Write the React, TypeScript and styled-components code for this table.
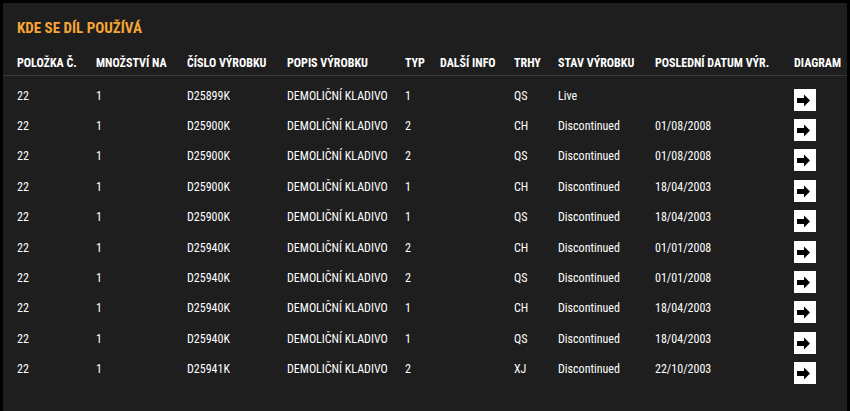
import React from "react";
import styled, { createGlobalStyle } from "styled-components";

const GlobalStyle = createGlobalStyle`
  html, body {
    margin: 0;
    padding: 0;
    background: #000;
    width: 850px;
    height: 411px;
    overflow: hidden;
  }
  * { box-sizing: border-box; }
`;

const FONT = `"Roboto Condensed", "Liberation Sans Narrow", "DejaVu Sans Condensed", sans-serif`;

const Panel = styled.section`
  margin: 3px 3px 0 3px;
  height: 408px;
  background: #1e1e1e;
  padding-top: 15px;
  font-family: ${FONT};
  color: #fff;
`;

const Title = styled.h2`
  margin: 0 0 11px 14px;
  font-size: 15px;
  line-height: 20px;
  font-weight: 700;
  color: #f7a535;
  text-transform: uppercase;
`;

const Table = styled.table`
  width: 844px;
  table-layout: fixed;
  border-collapse: collapse;
  border-spacing: 0;
`;

const HeadCell = styled.th<{ $first?: boolean }>`
  text-align: left;
  font-size: 12px;
  font-weight: 700;
  line-height: 14px;
  padding: 7px 0 5px ${(p) => (p.$first ? "14px" : "0")};
  border-bottom: 1px solid #3a3a3a;
  white-space: nowrap;
  text-transform: uppercase;
`;

const Cell = styled.td<{ $first?: boolean }>`
  height: 30.4px;
  padding: 13px 0 0 ${(p) => (p.$first ? "14px" : "0")};
  vertical-align: top;
  font-size: 12px;
  line-height: 14px;
  white-space: nowrap;
`;

const DiagramButton = styled.button`
  width: 22px;
  height: 22px;
  margin: 0 0 -5px 0;
  padding: 0;
  border: none;
  background: #fff;
  cursor: pointer;
  display: flex;
  align-items: center;
  justify-content: center;
`;

const ArrowIcon = () => (
  <svg width="22" height="22" viewBox="0 0 22 22" aria-hidden="true">
    <rect x="3" y="9" width="8" height="5" fill="#000" />
    <polygon points="10,5.5 16,11.5 10,17.5" fill="#000" />
  </svg>
);

const widths = [93, 91, 100, 118, 35, 74, 44, 97, 139, 53];
const headers = [
  "Položka č.",
  "Množství na",
  "Číslo výrobku",
  "Popis výrobku",
  "Typ",
  "Další info",
  "Trhy",
  "Stav výrobku",
  "Poslední datum výr.",
  "Diagram",
];

type Row = {
  item: string;
  qty: string;
  code: string;
  desc: string;
  type: string;
  info: string;
  market: string;
  status: string;
  date: string;
};

const rows: Row[] = [
  { item: "22", qty: "1", code: "D25899K", desc: "DEMOLIČNÍ KLADIVO", type: "1", info: "", market: "QS", status: "Live", date: "" },
  { item: "22", qty: "1", code: "D25900K", desc: "DEMOLIČNÍ KLADIVO", type: "2", info: "", market: "CH", status: "Discontinued", date: "01/08/2008" },
  { item: "22", qty: "1", code: "D25900K", desc: "DEMOLIČNÍ KLADIVO", type: "2", info: "", market: "QS", status: "Discontinued", date: "01/08/2008" },
  { item: "22", qty: "1", code: "D25900K", desc: "DEMOLIČNÍ KLADIVO", type: "1", info: "", market: "CH", status: "Discontinued", date: "18/04/2003" },
  { item: "22", qty: "1", code: "D25900K", desc: "DEMOLIČNÍ KLADIVO", type: "1", info: "", market: "QS", status: "Discontinued", date: "18/04/2003" },
  { item: "22", qty: "1", code: "D25940K", desc: "DEMOLIČNÍ KLADIVO", type: "2", info: "", market: "CH", status: "Discontinued", date: "01/01/2008" },
  { item: "22", qty: "1", code: "D25940K", desc: "DEMOLIČNÍ KLADIVO", type: "2", info: "", market: "QS", status: "Discontinued", date: "01/01/2008" },
  { item: "22", qty: "1", code: "D25940K", desc: "DEMOLIČNÍ KLADIVO", type: "1", info: "", market: "CH", status: "Discontinued", date: "18/04/2003" },
  { item: "22", qty: "1", code: "D25940K", desc: "DEMOLIČNÍ KLADIVO", type: "1", info: "", market: "QS", status: "Discontinued", date: "18/04/2003" },
  { item: "22", qty: "1", code: "D25941K", desc: "DEMOLIČNÍ KLADIVO", type: "2", info: "", market: "XJ", status: "Discontinued", date: "22/10/2003" },
];

export default function App() {
  return (
    <>
      <GlobalStyle />
      <Panel>
        <Title>Kde se díl používá</Title>
        <Table>
          <colgroup>
            {widths.map((w, i) => (
              <col key={i} style={{ width: w }} />
            ))}
          </colgroup>
          <thead>
            <tr>
              {headers.map((h, i) => (
                <HeadCell key={h} $first={i === 0}>
                  {h}
                </HeadCell>
              ))}
            </tr>
          </thead>
          <tbody>
            {rows.map((r, i) => (
              <tr key={i}>
                <Cell $first>{r.item}</Cell>
                <Cell>{r.qty}</Cell>
                <Cell>{r.code}</Cell>
                <Cell>{r.desc}</Cell>
                <Cell>{r.type}</Cell>
                <Cell>{r.info}</Cell>
                <Cell>{r.market}</Cell>
                <Cell>{r.status}</Cell>
                <Cell>{r.date}</Cell>
                <Cell>
                  <DiagramButton aria-label="Diagram">
                    <ArrowIcon />
                  </DiagramButton>
                </Cell>
              </tr>
            ))}
          </tbody>
        </Table>
      </Panel>
    </>
  );
}
